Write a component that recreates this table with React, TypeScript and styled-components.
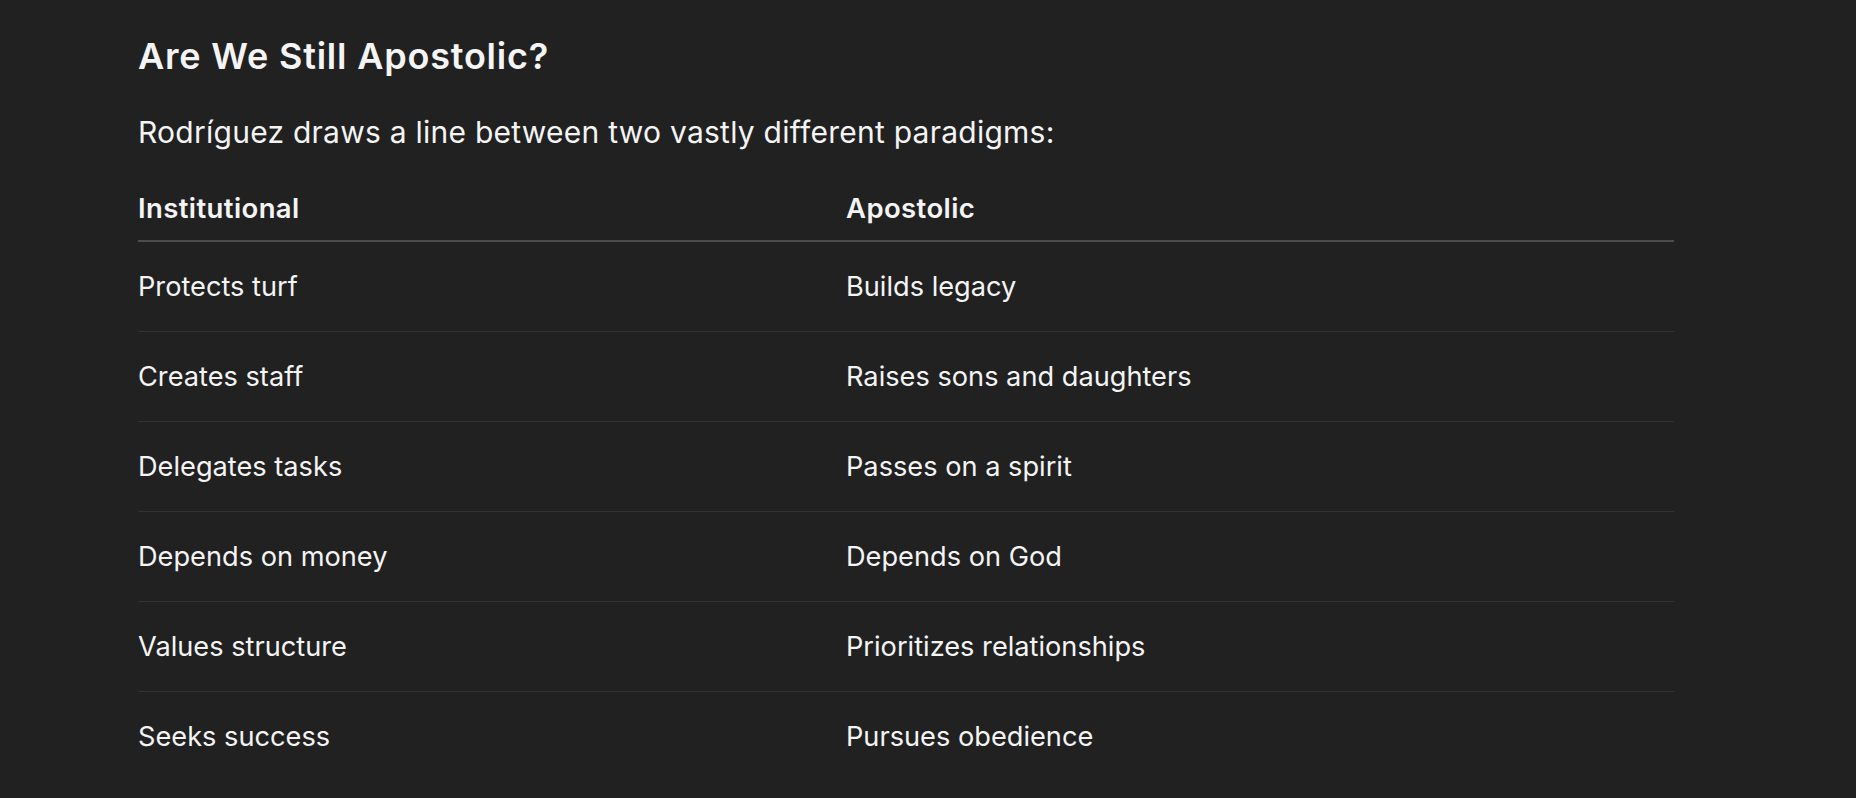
import React from 'react'
import styled, { createGlobalStyle } from 'styled-components'

const GlobalStyle = createGlobalStyle`
  html, body {
    margin: 0;
    padding: 0;
    background: #212121;
  }
  body {
    font-family: Inter, "Noto Sans", "Liberation Sans", sans-serif;
    color: #f4f4f4;
    -webkit-font-smoothing: antialiased;
  }
`

const Page = styled.main`
  min-height: 798px;
  padding: 35px 182px 0 138px;
  box-sizing: border-box;
`

const Title = styled.h2`
  margin: 0;
  font-size: 36px;
  line-height: 42px;
  font-weight: 600;
  letter-spacing: 0.8px;
`

const Lead = styled.p`
  margin: 34px 0 0;
  font-size: 30px;
  line-height: 42px;
  font-weight: 400;
  letter-spacing: 0.25px;
`

const Table = styled.table`
  width: 100%;
  margin-top: 24px;
  border-collapse: collapse;
  table-layout: fixed;
`

const HeadCell = styled.th`
  text-align: left;
  font-size: 27.5px;
  line-height: 39px;
  font-weight: 600;
  letter-spacing: 0.4px;
  padding: 12px 0 12px;
  border-bottom: 2px solid #4d4d4d;
`

const Row = styled.tr<{ $last?: boolean }>`
  border-bottom: ${p => (p.$last ? 'none' : '1px solid #333333')};
`

const Cell = styled.td`
  font-size: 27.2px;
  line-height: 40px;
  font-weight: 400;
  padding: 25px 0 24px;
`

const rows: [string, string][] = [
  ['Protects turf', 'Builds legacy'],
  ['Creates staff', 'Raises sons and daughters'],
  ['Delegates tasks', 'Passes on a spirit'],
  ['Depends on money', 'Depends on God'],
  ['Values structure', 'Prioritizes relationships'],
  ['Seeks success', 'Pursues obedience']
]

const App = () => {
  return (
    <>
      <GlobalStyle />
      <Page>
        <Title>Are We Still Apostolic?</Title>
        <Lead>Rodríguez draws a line between two vastly different paradigms:</Lead>
        <Table>
          <colgroup>
            <col style={{ width: 708 }} />
            <col />
          </colgroup>
          <thead>
            <tr>
              <HeadCell>Institutional</HeadCell>
              <HeadCell>Apostolic</HeadCell>
            </tr>
          </thead>
          <tbody>
            {rows.map(([a, b], i) => (
              <Row key={a} $last={i === rows.length - 1}>
                <Cell>{a}</Cell>
                <Cell>{b}</Cell>
              </Row>
            ))}
          </tbody>
        </Table>
      </Page>
    </>
  )
}

export default App
